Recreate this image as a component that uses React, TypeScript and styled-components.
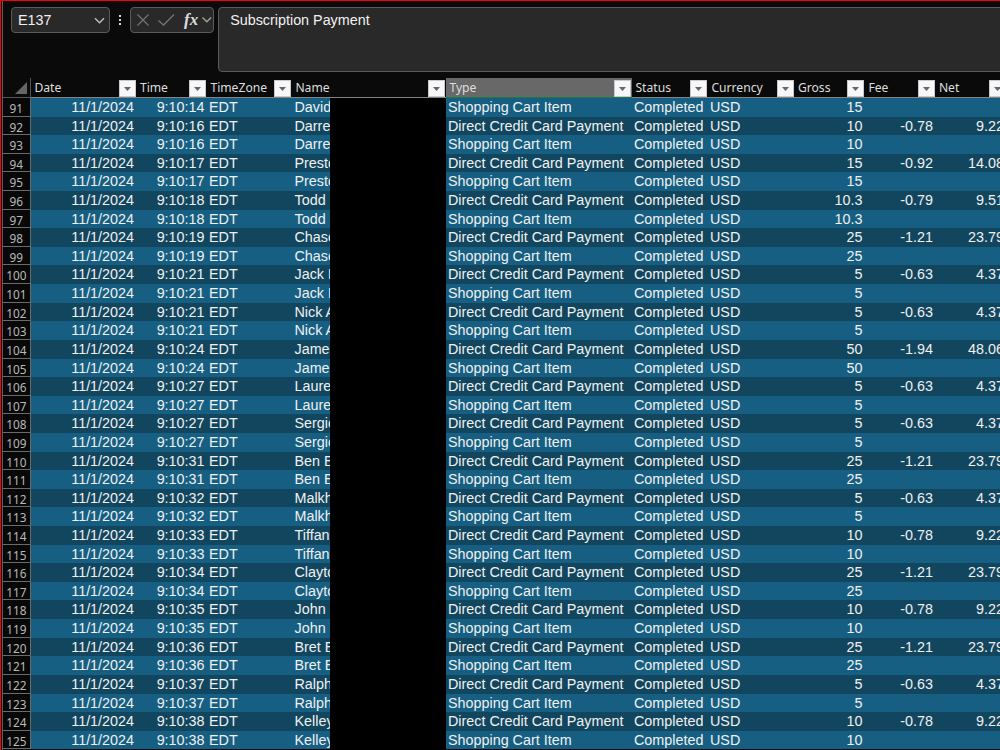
import React from 'react';
import styled, { createGlobalStyle } from 'styled-components';

const Global = createGlobalStyle`
  * { box-sizing: border-box; }
  body { margin: 0; background: #0a0a0a; overflow: hidden; }
`;

const Window = styled.div`
  width: 1000px;
  height: 750px;
  overflow: hidden;
  background: #0a0a0a;
  border-top: 1px solid #fb0007;
  border-left: 1px solid #fb0007;
  color: #f0f0f0;
  font-family: 'Liberation Sans', Arial, sans-serif;
  font-size: 14.35px;
`;

const Inner = styled.div`
  margin-left: 1px;
  border-left: 1px solid #5c5c5c;
  height: 749px;
  width: 1010px;
`;

const FormulaBar = styled.div`
  display: flex;
  height: 77px;
  padding: 6px 0 0 8px;
`;

const Field = styled.div`
  display: flex;
  align-items: center;
  height: 26px;
  border: 1px solid #5a5a5a;
  border-radius: 4px;
  background: #292929;
`;

const NameBox = styled(Field)`
  width: 100px;
  justify-content: space-between;
  padding: 0 4px 1px 6px;
`;

const Dots = styled.div`
  display: flex;
  flex-direction: column;
  gap: 2px;
  width: 20px;
  align-items: center;
  padding-top: 8px;
`;

const Dot = styled.i`
  width: 2px;
  height: 2px;
  background: #d8d8d8;
`;

const Actions = styled(Field)`
  width: 84px;
`;

const FormulaInput = styled.div`
  margin-left: 4px;
  width: 800px;
  height: 65px;
  border: 1px solid #5a5a5a;
  border-radius: 4px;
  background: #292929;
  padding: 4px 0 0 11px;
  line-height: 16px;
`;

const Sheet = styled.div`
  --cols: 28px 105.5px 70.5px 85px 154px 186px 76px 86.5px 70.5px 70.5px 71px;
`;

const HeaderRow = styled.div`
  display: grid;
  grid-template-columns: var(--cols);
  height: 20px;
  font-family: 'Noto Sans', 'Open Sans', sans-serif;
  font-size: 12.15px;
`;

const HeaderCell = styled.div<{ $active?: boolean }>`
  display: flex;
  align-items: flex-end;
  justify-content: space-between;
  height: 20px;
  padding: 0 0.6px 0 3.4px;
  line-height: 18px;
  color: #dedede;
  background: ${p => (p.$active ? '#686868' : 'transparent')};
  border-bottom: 1px solid ${p => (p.$active ? '#1d7a45' : '#848484')};
`;

const Corner = styled.div`
  display: flex;
  justify-content: flex-end;
  align-items: flex-end;
  padding: 0 3px 3px 0;
  border-right: 1px solid #555;
  border-bottom: 1px solid #555;
`;

const FilterButton = styled.span`
  display: flex;
  align-items: center;
  justify-content: center;
  width: 17px;
  height: 17px;
  background: #f7f7f9;
  border: 1px solid #c9c9cd;
`;

const DataRow = styled.div<{ $dark: boolean }>`
  display: grid;
  grid-template-columns: var(--cols);
  height: 18.62px;
  line-height: 19.2px;
  white-space: nowrap;
  background: ${p => (p.$dark ? '#12465f' : '#165f82')};
`;

const RowNumber = styled.div`
  height: 18.62px;
  padding-right: 3.5px;
  background: #080808;
  border-right: 1px solid #6a6a6a;
  border-bottom: 1px solid #6a6a6a;
  color: #b9b9b9;
  font-family: 'Noto Sans', 'Open Sans', sans-serif;
  font-size: 11.8px;
  line-height: 21px;
  text-align: right;
`;

const ShortNumber = styled(RowNumber)`
  padding-right: 7px;
`;

const Cell = styled.div<{ $right?: boolean }>`
  padding: 0 2.5px 0 2px;
  text-align: ${p => (p.$right ? 'right' : 'left')};
`;

const NameCell = styled.div`
  display: flex;
  justify-content: space-between;
  background: #000;
`;

const NameText = styled.div<{ $dark: boolean }>`
  width: 38px;
  height: 18.62px;
  padding-left: 2.5px;
  overflow: hidden;
  background: ${p => (p.$dark ? '#12465f' : '#165f82')};
`;

const Chevron = () => (
  <svg width="11" height="8" viewBox="0 0 11 8" fill="none" stroke="#bdbdbd" strokeWidth="1.5">
    <path d="M1 2.2 5.5 6.7 10 2.2" />
  </svg>
);

const ActionIcons = () => (
  <svg width="82" height="24" viewBox="0 0 82 24" fill="none">
    <path d="M6.5 6.5 17.5 17.5M17.5 6.5 6.5 17.5" stroke="#747474" strokeWidth="1.2" />
    <path d="M27.5 12.5 32.5 17 43 6.5" stroke="#747474" strokeWidth="1.3" />
    <text x="53" y="16.5" fill="#dcdcdc" fontFamily="Liberation Serif, serif" fontStyle="italic" fontWeight="bold" fontSize="17">fx</text>
    <path d="M71.5 9.5 75.8 13.8 80.1 9.5" stroke="#a0a0a0" strokeWidth="1.4" />
  </svg>
);

const Filter = () => (
  <FilterButton>
    <svg width="7" height="4" viewBox="0 0 7 4"><path d="M0 0H7L3.5 4Z" fill="#666" /></svg>
  </FilterButton>
);

const headers = ['Date', 'Time', 'TimeZone', 'Name', 'Type', 'Status', 'Currency', 'Gross', 'Fee', 'Net'];

type Entry = [time: string, name: string, gross: string, fee: string, net: string];

const first: Entry = ['14', 'David', '15', '', ''];
const payments: Entry[] = [
  ['16', 'Darre', '10', '-0.78', '9.22'],
  ['17', 'Preston', '15', '-0.92', '14.08'],
  ['18', 'Todd', '10.3', '-0.79', '9.51'],
  ['19', 'Chase', '25', '-1.21', '23.79'],
  ['21', 'Jack L', '5', '-0.63', '4.37'],
  ['21', 'Nick A', '5', '-0.63', '4.37'],
  ['24', 'Jame', '50', '-1.94', '48.06'],
  ['27', 'Laure', '5', '-0.63', '4.37'],
  ['27', 'Sergio', '5', '-0.63', '4.37'],
  ['31', 'Ben E', '25', '-1.21', '23.79'],
  ['32', 'Malkh', '5', '-0.63', '4.37'],
  ['33', 'Tiffan', '10', '-0.78', '9.22'],
  ['34', 'Clayto', '25', '-1.21', '23.79'],
  ['35', 'John', '10', '-0.78', '9.22'],
  ['36', 'Bret E', '25', '-1.21', '23.79'],
  ['37', 'Ralph', '5', '-0.63', '4.37'],
  ['38', 'Kelley', '10', '-0.78', '9.22'],
];
const rows: Entry[] = [
  first,
  ...payments.flatMap((p): Entry[] => [p, [p[0], p[1], p[2], '', '']]),
];

export default function App() {
  return (
    <Window>
      <Global />
      <Inner>
        <FormulaBar>
          <NameBox>E137<Chevron /></NameBox>
          <Dots><Dot /><Dot /><Dot /></Dots>
          <Actions><ActionIcons /></Actions>
          <FormulaInput>Subscription Payment</FormulaInput>
        </FormulaBar>
        <Sheet>
          <HeaderRow>
            <Corner>
              <svg width="12" height="12" viewBox="0 0 12 12"><path d="M12 0V12H0Z" fill="#666" /></svg>
            </Corner>
            {headers.map(h => (
              <HeaderCell key={h} $active={h === 'Type'}>{h}<Filter /></HeaderCell>
            ))}
          </HeaderRow>
          {rows.map(([time, name, gross, fee, net], i) => {
            const dark = i % 2 === 1;
            const n = 91 + i;
            const Num = n < 100 ? ShortNumber : RowNumber;
            return (
              <DataRow key={n} $dark={dark}>
                <Num>{n}</Num>
                <Cell $right>11/1/2024</Cell>
                <Cell $right>9:10:{time}</Cell>
                <Cell>EDT</Cell>
                <NameCell><NameText $dark={dark}>{name}</NameText></NameCell>
                <Cell>{dark ? 'Direct Credit Card Payment' : 'Shopping Cart Item'}</Cell>
                <Cell>Completed</Cell>
                <Cell>USD</Cell>
                <Cell $right>{gross}</Cell>
                <Cell $right>{fee}</Cell>
                <Cell $right>{net}</Cell>
              </DataRow>
            );
          })}
        </Sheet>
      </Inner>
    </Window>
  );
}
